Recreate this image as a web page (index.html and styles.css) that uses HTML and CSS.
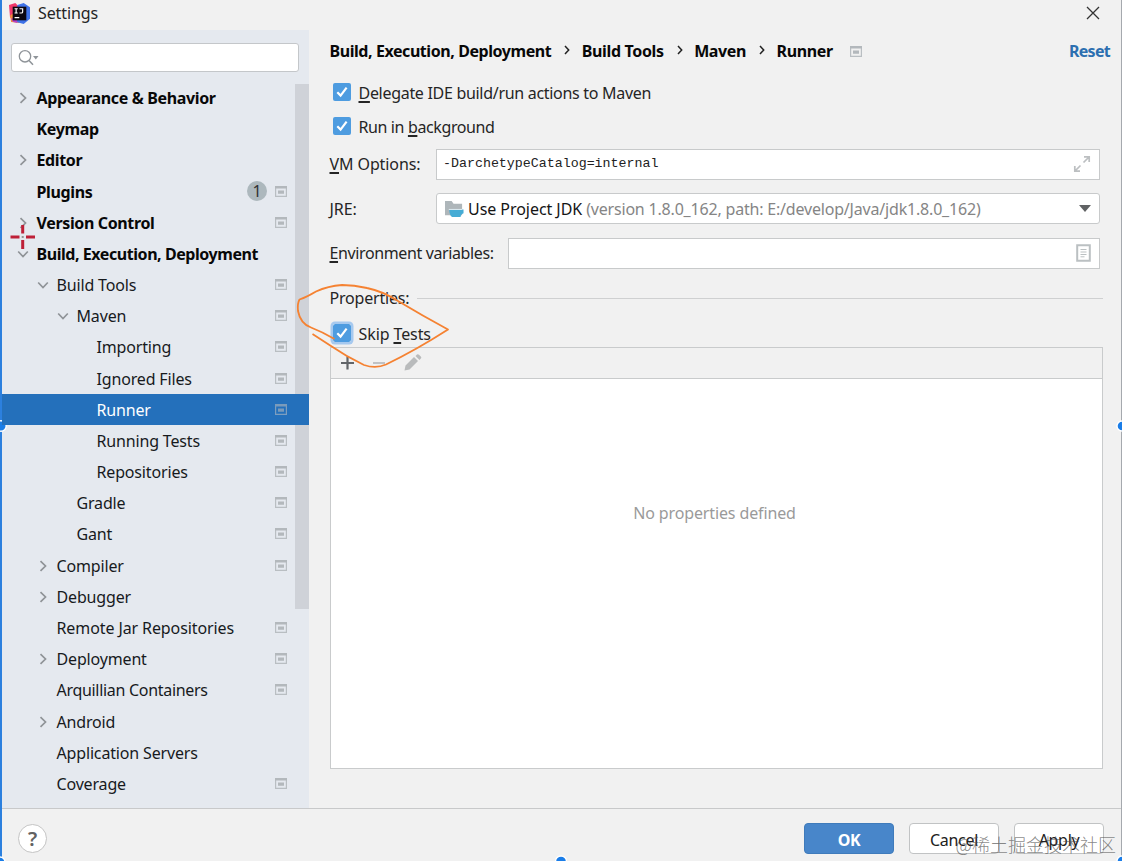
FILE: index.html
```
<!DOCTYPE html>
<html lang="en">
<head>
<meta charset="utf-8">
<title>Settings</title>
<link rel="stylesheet" href="styles.css">
</head>
<body>
<svg class="defs" width="0" height="0">
  <symbol id="right" viewBox="0 0 12 12"><path d="M3.5 1.2 8.5 6 3.5 10.8" fill="none" stroke="#8f9397" stroke-width="1.7"/></symbol>
  <symbol id="down" viewBox="0 0 12 12"><path d="M1.2 3.5 6 8.5 10.8 3.5" fill="none" stroke="#8f9397" stroke-width="1.7"/></symbol>
  <symbol id="proj" viewBox="0 0 12 11"><path d="M.6.5h10.8v9.800H.6z" fill="none" stroke="#b9bec2" stroke-width="1.2"/><path d="M0 0h12v2.500H0zM3 4.500h6v3.200H3z" fill="#b3b8bc"/></symbol>
  <symbol id="tick" viewBox="0 0 18 18"><rect width="18" height="18" rx="2" fill="#4e9ce0"/><path d="M4.3 9.2 7.6 12.6 13.6 4.6" fill="none" stroke="#fff" stroke-width="2.2"/></symbol>
</svg>
<div class="window">
  <header class="titlebar">
    <svg class="logo" viewBox="0 0 20 20"><path d="M0 2 6 0l4 4-3 9-6 1z" fill="#f0386b"/><path d="m1 12 6-4 3 11-8-1z" fill="#f58a3c"/><path d="m8 2 6-2 6 4v11l-6 5-7-2z" fill="#3f72e8"/><path d="m2 15 5-2 1 6-4-1z" fill="#b744c8"/><path d="M3.5 3.5h13v13h-13z" fill="#0b0710"/><path d="M5.3 5.5h3M6.8 5.5v4M5.3 9.5h3M10 5.5h3v3q0 1-1.2 1H10M5.3 14h4.5" fill="none" stroke="#fff" stroke-width="1.1"/></svg>
    <span class="title">Settings</span>
    <svg class="close" viewBox="0 0 14 14"><path d="m1 1 12 12M13 1 1 13" stroke="#333" stroke-width="1.3"/></svg>
  </header>
  <div class="main">
    <aside class="sidebar">
      <div class="search"><svg width="22" height="18" viewBox="0 0 22 18"><circle cx="7" cy="7.3" r="5.7" fill="none" stroke="#8f9499" stroke-width="1.3"/><path d="m11 11.5 4 4.2" stroke="#8f9499" stroke-width="1.6"/><path d="M15 7h5.5l-2.7 3.6z" fill="#8f9499"/></svg></div>
      <nav class="tree">
        <div class="row l0"><svg class="arrow"><use href="#right"/></svg><span>Appearance &amp; Behavior</span></div>
        <div class="row l0"><i class="arrow"></i><span>Keymap</span></div>
        <div class="row l0"><svg class="arrow"><use href="#right"/></svg><span>Editor</span></div>
        <div class="row l0"><i class="arrow"></i><span>Plugins</span><b class="badge">1</b><svg class="proj"><use href="#proj"/></svg></div>
        <div class="row l0"><svg class="arrow"><use href="#right"/></svg><span>Version Control</span><svg class="proj"><use href="#proj"/></svg></div>
        <div class="row l0"><svg class="arrow"><use href="#down"/></svg><span class="tight">Build, Execution, Deployment</span></div>
        <div class="row l1"><svg class="arrow"><use href="#down"/></svg><span>Build Tools</span><svg class="proj"><use href="#proj"/></svg></div>
        <div class="row l2"><svg class="arrow"><use href="#down"/></svg><span>Maven</span><svg class="proj"><use href="#proj"/></svg></div>
        <div class="row l3"><i class="arrow"></i><span>Importing</span><svg class="proj"><use href="#proj"/></svg></div>
        <div class="row l3"><i class="arrow"></i><span>Ignored Files</span><svg class="proj"><use href="#proj"/></svg></div>
        <div class="row l3 selected"><i class="arrow"></i><span>Runner</span><svg class="proj"><use href="#proj"/></svg></div>
        <div class="row l3"><i class="arrow"></i><span>Running Tests</span><svg class="proj"><use href="#proj"/></svg></div>
        <div class="row l3"><i class="arrow"></i><span>Repositories</span><svg class="proj"><use href="#proj"/></svg></div>
        <div class="row l2"><i class="arrow"></i><span>Gradle</span><svg class="proj"><use href="#proj"/></svg></div>
        <div class="row l2"><i class="arrow"></i><span>Gant</span><svg class="proj"><use href="#proj"/></svg></div>
        <div class="row l1"><svg class="arrow"><use href="#right"/></svg><span>Compiler</span><svg class="proj"><use href="#proj"/></svg></div>
        <div class="row l1"><svg class="arrow"><use href="#right"/></svg><span>Debugger</span></div>
        <div class="row l1"><i class="arrow"></i><span class="wide">Remote Jar Repositories</span><svg class="proj"><use href="#proj"/></svg></div>
        <div class="row l1"><svg class="arrow"><use href="#right"/></svg><span>Deployment</span><svg class="proj"><use href="#proj"/></svg></div>
        <div class="row l1"><i class="arrow"></i><span class="narrow">Arquillian Containers</span><svg class="proj"><use href="#proj"/></svg></div>
        <div class="row l1"><svg class="arrow"><use href="#right"/></svg><span>Android</span></div>
        <div class="row l1"><i class="arrow"></i><span>Application Servers</span></div>
        <div class="row l1"><i class="arrow"></i><span>Coverage</span><svg class="proj"><use href="#proj"/></svg></div>
      </nav>
      <div class="scroll"></div>
    </aside>
    <section class="content">
      <div class="crumbs">
        <span>Build, Execution, Deployment</span><svg class="sep" viewBox="0 0 6 10"><path d="m1 1 3.700 4L1 9" fill="none" stroke="#222" stroke-width="1.5"/></svg>
        <span class="short">Build Tools</span><svg class="sep" viewBox="0 0 6 10"><path d="m1 1 3.700 4L1 9" fill="none" stroke="#222" stroke-width="1.5"/></svg>
        <span class="short">Maven</span><svg class="sep" viewBox="0 0 6 10"><path d="m1 1 3.700 4L1 9" fill="none" stroke="#222" stroke-width="1.5"/></svg>
        <span class="short">Runner</span><svg class="proj"><use href="#proj"/></svg>
        <a class="reset">Reset</a>
      </div>
      <div class="check first"><svg><use href="#tick"/></svg><span class="delegate"><u>D</u>elegate IDE build/run actions to Maven</span></div>
      <div class="check"><svg><use href="#tick"/></svg><span class="background">Run in <u>b</u>ackground</span></div>
      <div class="field vm"><label><u>V</u>M Options:</label><div class="input"><code>-DarchetypeCatalog=internal</code><svg width="18" height="18" viewBox="0 0 18 18" fill="none" stroke="#bcbfc1" stroke-width="1.7"><path d="M10.5 7.5 16 2M11 1.8h5.2V7M7.5 10.5 2 16M1.8 11v5.2H7"/></svg></div></div>
      <div class="field jre"><label><u>J</u>RE:</label><div class="input select"><svg class="folder" viewBox="0 0 20 20"><path d="M0 2h7l2 3h9v12H0z" fill="#aeb6ba"/><path d="M4.5 11h15v4l-2 1-1 2v1h-9q-3-2-3-8" fill="#46acd5"/><path d="M4 11h14" stroke="#fff" stroke-width=".8"/></svg><span class="jdk">Use Project JDK</span><span class="version">(version 1.8.0_162, path: E:/develop/Java/jdk1.8.0_162)</span><svg class="caret" viewBox="0 0 12 7"><path d="M0 0h12L6 7z" fill="#606264"/></svg></div></div>
      <div class="field env"><label><u>E</u>nvironment variables:</label><div class="input"><svg width="15" height="18" viewBox="0 0 15 18" fill="none" stroke="#bbc0c2"><path d="M1.2 1.2h12.6v15.6H1.2z" stroke-width="2"/><path d="M4.5 5.5h6M4.5 8h6M4.5 10.5h6M4.5 12.8h4"/></svg></div></div>
      <div class="group"><span>Properties:</span><hr></div>
      <div class="check skip"><svg class="focus"><use href="#tick"/></svg><span>Skip <u>T</u>ests</span></div>
      <div class="table">
        <div class="tools"><svg width="84" height="20" viewBox="0 0 84 20"><path d="M0 10h13M6.500 3.500v13" stroke="#626568" stroke-width="2.2"/><path d="M32 10h12" stroke="#c0c2c4" stroke-width="2"/><path d="m63.500 17.500 1-5L73 4l4 4-8.500 8.500z M74.500 3l1.500-1.500q1-.7 2 .2l2 2q.8 1-.2 1.900L78.500 7z" fill="#b9bbbc"/></svg></div>
        <div class="empty">No properties defined</div>
      </div>
    </section>
  </div>
  <footer class="footer">
    <div class="help">?</div>
    <button class="ok">OK</button><button>Cancel</button><button>Apply</button>
  </footer>
  <div class="watermark">@稀土掘金技术社区</div>
  <svg class="marks" width="1122" height="861" viewBox="0 0 1122 861">
    <path d="M334.500 339C326 334 320 331 311 327.500 304 325 299.500 319 298 311 297.500 306 297.500 303 299.500 299.500 Q307 297 316 291.500 Q328 286 342 285 Q354 285 367 288 Q382 291 398 301 Q423 316 448 329.500 Q416 350 386 364.500 Q376 369 364 365 Q347 357 331 346 L312.500 334" fill="none" stroke="#f58232" stroke-width="1.8" stroke-linejoin="round"/>
    <path d="M22.700 225v8.500M22.700 240v9M10.500 237h9M26 237h9" stroke="#be2038" stroke-width="3"/>
    <path d="M21.700 237h2" stroke="#777" stroke-width="1.500"/>
    <g fill="#1a7de8" stroke="#fff" stroke-width="1.400"><circle cx="1" cy="426" r="5.200"/><circle cx="1122" cy="426" r="5"/><circle cx="561" cy="861.500" r="5.500"/><circle cx="0" cy="862" r="5"/><circle cx="1122" cy="861" r="5"/></g>
  </svg>
</div>
</body>
</html>
```
FILE: styles.css
```
* { box-sizing: border-box; }
body { margin: 0; width: 1122px; height: 861px; overflow: hidden; font: 16px/22px "Noto Sans", "Noto Sans CJK SC", sans-serif; color: #252525; background: #f1f1f1; }
.defs { position: absolute; }
.window { position: relative; display: flex; flex-direction: column; height: 861px; border-left: 2px solid #2c80de; border-right: 1px solid #a5a9ae; }
.titlebar { display: flex; align-items: center; height: 30px; padding: 0 21.500px 4px 7px; letter-spacing: -.12px; }
.logo { width: 21px; height: 21px; margin-right: 8px; }
.close { width: 14px; height: 14px; margin-left: auto; }
.main { display: flex; height: 778px; }
.sidebar { position: relative; width: 306.500px; padding-top: 13px; background: #e5e9ef; flex: none; color: #171a1d; }
.search { width: 288px; height: 29px; margin-left: 8.500px; padding: 5px 6px; background: #fff; border: 1px solid #c4c7ca; border-radius: 3px; }
.search svg { display: block; }
.tree { padding-top: 10.500px; }
.row { display: flex; align-items: center; height: 31.180px; padding-right: 21.500px; white-space: nowrap; letter-spacing: -.16px; }
.row span { margin-left: 7.500px; }
.row .tight { letter-spacing: -.44px; }
.row .narrow { letter-spacing: -.3px; }
.row .wide { letter-spacing: -.1px; }
.l0 { padding-left: 15px; font-weight: 700; color: #080808; letter-spacing: -.36px; }
.l1 { padding-left: 35px; }
.l2 { padding-left: 55px; }
.l3 { padding-left: 75px; }
.arrow { width: 12px; height: 12px; flex: none; }
.proj { width: 12px; height: 11px; margin: 0 0 1px auto; flex: none; }
.badge { width: 20px; height: 20px; margin: 0 8px 2px auto; border-radius: 10px; background: #adb8bd; text-align: center; font-weight: 400; font-size: 16px; line-height: 21px; color: #333; }
.badge + .proj { margin-left: 0; }
.selected { position: relative; z-index: 1; background: #2470bb; color: #fff; }
.selected .proj { opacity: .6; }
.scroll { position: absolute; left: 293px; top: 54px; width: 13.500px; height: 525px; background: rgba(170, 174, 178, .38); }
.content { display: flex; flex-direction: column; flex: 1; padding: 10px 18px 0 21px; }
.crumbs { display: flex; align-items: center; height: 22px; margin-right: -7px; font-weight: 700; color: #080808; letter-spacing: -.43px; }
.crumbs .short { letter-spacing: -.36px; }
.sep { width: 6px; height: 10px; margin: 0 11.500px 2px 13px; }
.crumbs .proj { margin: 0 0 0 17px; }
.reset { margin-left: auto; color: #2c6fb0; letter-spacing: -.7px; }
.check { display: flex; align-items: center; height: 22px; margin: 12px 0 0 3px; }
.check svg { width: 18px; height: 18px; margin: -2px 8px 0 0; }
.first { margin-top: 20px; }
.delegate { letter-spacing: -.3px; }
.background { letter-spacing: -.38px; }
u { text-decoration-thickness: 1.500px; text-underline-offset: 2px; }
.field { display: flex; align-items: center; height: 31px; margin-right: 3.500px; }
.field label { width: 106.500px; flex: none; letter-spacing: -.1px; }
.input { display: flex; align-items: center; flex: 1; height: 31px; padding: 0 8px 0 6px; border: 1px solid #c8cacb; background: #fff; }
.input > svg:last-child { margin-left: auto; }
.input code { font: 13.300px "Liberation Mono", monospace; padding-bottom: 2px; color: #222; }
.vm { margin-top: 10.500px; }
.jre { margin-top: 13.500px; }
.env { margin-top: 13.500px; margin-bottom: .5px; }
.env label { width: 178.500px; letter-spacing: -.38px; }
.select { border-radius: 3px; padding-left: 8px; }
.folder { width: 19px; height: 19px; margin-right: 4px; }
.jdk { color: #151515; margin-right: 4px; letter-spacing: -.05px; }
.version { color: #858585; letter-spacing: -.19px; }
.caret { width: 12px; height: 7px; }
.group { display: flex; align-items: center; height: 22px; margin-top: 18px; letter-spacing: -.2px; }
.group hr { flex: 1; margin: 0 0 0 8px; border: 0; border-top: 1px solid #cfd0d1; }
.skip { margin-top: 14px; letter-spacing: -.1px; }
.focus { border-radius: 2px; box-shadow: 0 0 0 2.500px #a6c9ef; }
.table { display: flex; flex-direction: column; width: 773px; height: 422px; margin-top: 2px; border: 1px solid #c9cbcc; background: #fff; }
.tools { height: 31px; padding: 5px 0 0 10px; background: #f1f1f1; border-bottom: 1px solid #c9cbcc; }
.empty { padding: 123px 3px 0 0; text-align: center; color: #9a9a9a; letter-spacing: -.13px; }
.footer { display: flex; align-items: flex-start; height: 53px; padding: 14px 17px 0 16px; border-top: 1px solid #c8c9ca; gap: 15px; }
.help { width: 29px; height: 29px; margin: 1px auto 0 0; border: 1px solid #c4c4c4; border-radius: 15px; background: #fff; text-align: center; font-size: 20px; font-weight: 600; line-height: 27px; color: #626262; }
button { width: 90px; height: 31px; padding: 2px 0 0; border: 1px solid #c1c3c4; border-radius: 4px; background: #fff; font: inherit; color: #202020; letter-spacing: -.3px; }
.ok { background: #4886ca; border-color: #3f7bbb; color: #fff; font-weight: 700; }
.watermark { position: absolute; right: 5px; top: 832px; font: 300 18px/24px "Noto Sans CJK SC", sans-serif; color: rgba(70, 70, 70, .65); white-space: nowrap; }
.marks { position: absolute; left: -2px; top: 0; pointer-events: none; }
```
